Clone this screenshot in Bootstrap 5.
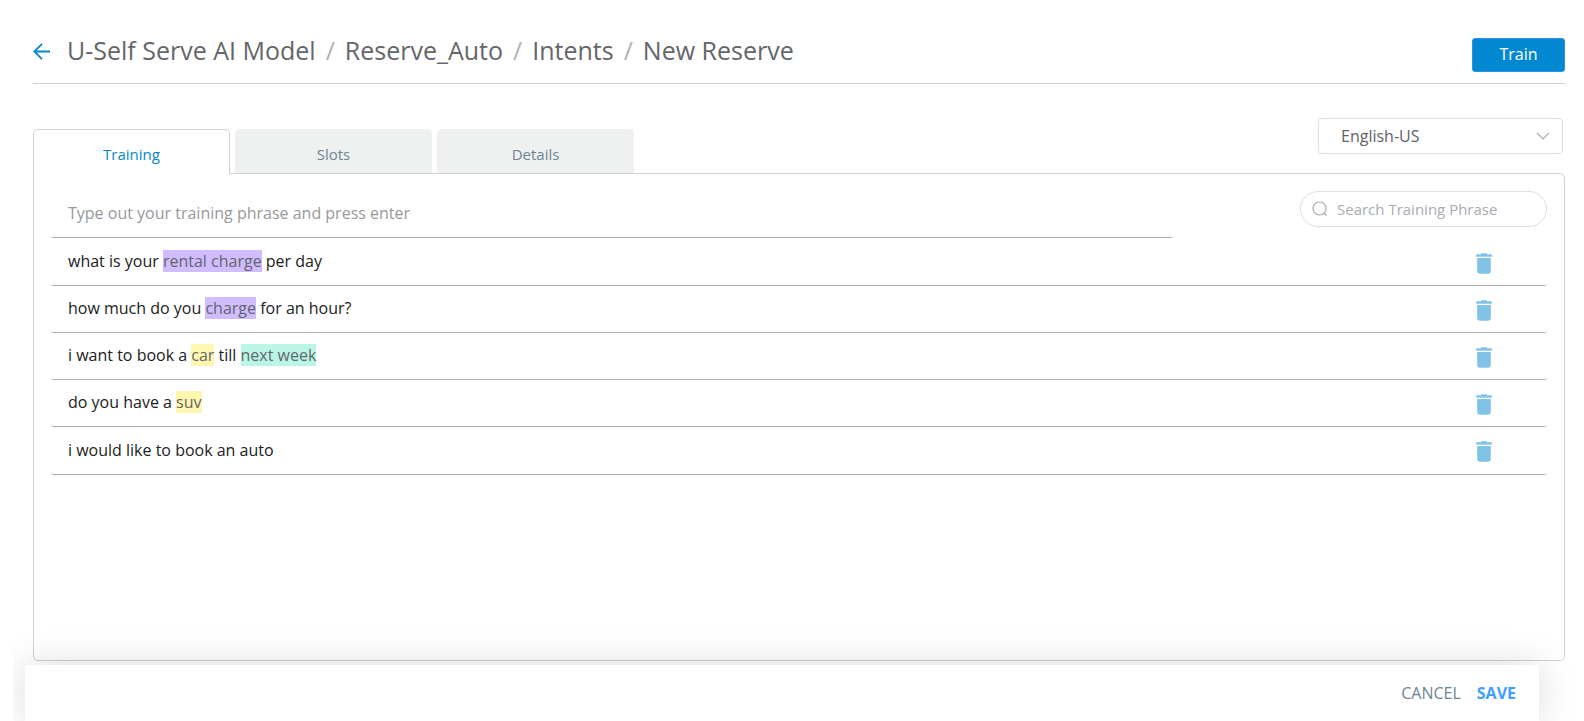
<!DOCTYPE html>
<html lang="en">
<head>
<meta charset="utf-8">
<meta name="viewport" content="width=device-width, initial-scale=1">
<title>New Reserve - Training</title>
<link rel="stylesheet" href="https://cdn.jsdelivr.net/npm/bootstrap@5.3.0/dist/css/bootstrap.min.css">
<style>
  body { font-family: "Open Sans", "Noto Sans", sans-serif; font-size: 16px; line-height: 24px; color: #212121; background: #fff; }
  .page-main { padding: 28px 19px 0 33px; }
  .page-head { height: 56px; border-bottom: 1px solid #cfd2d3; }
  .back-link { color: #0288d1; width: 34px; padding-top: 15px; }
  .crumbs { --bs-breadcrumb-divider-color: #aeb1b9; --bs-breadcrumb-item-padding-x: 10px; --bs-breadcrumb-font-size: 25px; line-height: 36px; padding-top: 4px; }
  .crumbs a, .crumbs .breadcrumb-item.active { color: #63666a; text-decoration: none; }
  .btn-train { width: 93px; height: 34px; margin-top: 10px; padding: 0 0 2px; font-weight: 500; border-radius: 3px; color: #fff; background: #0288d1; border: 1px solid #2f8ff0; line-height: 30px; }
  .btn-train:hover { background: #0277bd; color: #fff; }
  .tab-bar { margin-top: 34px; }
  .phrase-tabs { gap: 5px; border: 0; }
  .phrase-tabs .nav-link { width: 197px; height: 44px; margin: 0; padding: 4px 0 0; font-size: 15px; border: 1px solid #eff1f1; border-bottom: 0; border-radius: 5px 5px 0 0; background: #eff1f1; color: #6c8591; }
  .phrase-tabs .nav-link.active { height: 45px; margin-bottom: -1px; position: relative; z-index: 1; border-color: #d0d3d6; background: #fff; color: #0288d1; }
  .lang-select { width: 245px; height: 36px; margin: 0 2px 19px 0; padding: 0 40px 0 22px; color: #606266; border-color: #dcdfe6; border-radius: 4px; background: #fff; appearance: none; }
  .lang-wrap svg { position: absolute; right: 15px; top: 13px; pointer-events: none; }
  .panel { border: 1px solid #cfd2d3; border-radius: 0 5px 5px 5px; padding: 17px 17px 0; }
  .phrase-input { width: 75%; height: 47px; padding: 0 17px 2px; border: 0; border-bottom: 1px solid #aab1b3; border-radius: 3px; color: #212121; }
  .phrase-input::placeholder { color: #97989b; }
  .search-wrap { width: 247px; }
  .search-wrap svg { position: absolute; left: 12px; top: 10px; }
  .search-field { height: 36px; border-radius: 18px; border-color: #dcdfe6; padding: 0 15px 0 36px; font-size: 15px; }
  .search-field::placeholder { color: #a8abb2; }
  .phrases { margin-top: 1px; }
  .phrase { height: 47px; padding: 0 55px 2px 17px; border-bottom: 1px solid #aab1b3; border-radius: 3px; }
  .phrase:last-child { height: 48px; }
  .entity { color: #63666a; padding: 0; }
  .entity-charge { background: #d0bcff; }
  .entity-vehicle { background: #fff7b0; }
  .entity-date { background: #b9f6e6; }
  .btn-trash { padding: 4px 0 0; border: 0; line-height: 0; color: #81c3e7; }
  .btn-trash:hover { color: #0288d1; }
  .action-bar { height: 56px; margin: 4px 45px 0 25px; padding-right: 23px; background: #fff; box-shadow: 0 0 38px rgba(0, 0, 0, .15); clip-path: inset(-50px -40px 0 -12px); }
  .action-bar .btn { padding: 0; border: 0; line-height: 24px; }
  .btn-cancel { color: #6c8591; }
  .btn-save { color: #409eff; font-weight: 700; }
</style>
</head>
<body class="d-flex flex-column min-vh-100">
<svg class="d-none" aria-hidden="true">
  <symbol id="trash" viewBox="0 0 16 21">
    <path d="M5 .3h6v1h4.800v2.500H.2V1.300H5z M1.200 5h13.600v13a2.800 2.800 0 0 1-2.800 2.800H4a2.800 2.800 0 0 1-2.800-2.800z" fill="currentColor"/>
  </symbol>
</svg>
<main class="page-main flex-grow-1 d-flex flex-column">
  <header class="page-head d-flex align-items-start">
    <a href="#" class="back-link" aria-label="Back">
      <svg class="d-block" width="18" height="17" viewBox="0 0 18 17" fill="none" stroke="currentColor" stroke-width="1.800"><path d="M17 8.500H1.500M9 .8L1.300 8.500 9 16.200"/></svg>
    </a>
    <nav aria-label="breadcrumb" class="flex-grow-1">
      <ol class="breadcrumb crumbs mb-0">
        <li class="breadcrumb-item"><a href="#">U-Self Serve AI Model</a></li>
        <li class="breadcrumb-item"><a href="#">Reserve_Auto</a></li>
        <li class="breadcrumb-item"><a href="#">Intents</a></li>
        <li class="breadcrumb-item active" aria-current="page">New Reserve</li>
      </ol>
    </nav>
    <button type="button" class="btn btn-train">Train</button>
  </header>

  <div class="tab-bar d-flex justify-content-between align-items-end">
    <div class="nav nav-tabs phrase-tabs" role="tablist">
      <button class="nav-link active" type="button" role="tab" aria-selected="true">Training</button>
      <button class="nav-link" type="button" role="tab" aria-selected="false">Slots</button>
      <button class="nav-link" type="button" role="tab" aria-selected="false">Details</button>
    </div>
    <div class="lang-wrap position-relative">
      <select class="form-select lang-select" aria-label="Language">
        <option>English-US</option>
      </select>
      <svg width="14" height="10" viewBox="0 0 14 10" fill="none" stroke="#a8abb2" stroke-width="1.200"><path d="M1 2l6 6 6-6"/></svg>
    </div>
  </div>

  <section class="panel flex-grow-1">
    <div class="d-flex justify-content-between align-items-start">
      <input type="text" class="phrase-input" placeholder="Type out your training phrase and press enter" aria-label="Training phrase">
      <div class="search-wrap position-relative">
        <svg width="16" height="16" viewBox="0 0 16 16" fill="none" stroke="#a8abb2" stroke-width="1.200"><circle cx="7.500" cy="7.500" r="6.500"/><path d="M12 12l2.500 2.500"/></svg>
        <input type="search" class="form-control search-field" placeholder="Search Training Phrase" aria-label="Search Training Phrase">
      </div>
    </div>
    <ul class="list-unstyled phrases mb-0">
      <li class="phrase d-flex align-items-center justify-content-between">
        <span>what is your <mark class="entity entity-charge">rental charge</mark> per day</span>
        <button type="button" class="btn btn-trash" aria-label="Delete phrase"><svg width="16" height="21"><use href="#trash"/></svg></button>
      </li>
      <li class="phrase d-flex align-items-center justify-content-between">
        <span>how much do you <mark class="entity entity-charge">charge</mark> for an hour?</span>
        <button type="button" class="btn btn-trash" aria-label="Delete phrase"><svg width="16" height="21"><use href="#trash"/></svg></button>
      </li>
      <li class="phrase d-flex align-items-center justify-content-between">
        <span>i want to book a <mark class="entity entity-vehicle">car</mark> till <mark class="entity entity-date">next week</mark></span>
        <button type="button" class="btn btn-trash" aria-label="Delete phrase"><svg width="16" height="21"><use href="#trash"/></svg></button>
      </li>
      <li class="phrase d-flex align-items-center justify-content-between">
        <span>do you have a <mark class="entity entity-vehicle">suv</mark></span>
        <button type="button" class="btn btn-trash" aria-label="Delete phrase"><svg width="16" height="21"><use href="#trash"/></svg></button>
      </li>
      <li class="phrase d-flex align-items-center justify-content-between">
        <span>i would like to book an auto</span>
        <button type="button" class="btn btn-trash" aria-label="Delete phrase"><svg width="16" height="21"><use href="#trash"/></svg></button>
      </li>
    </ul>
  </section>
</main>
<footer class="action-bar d-flex justify-content-end align-items-center gap-3">
  <button type="button" class="btn btn-cancel">CANCEL</button>
  <button type="button" class="btn btn-save">SAVE</button>
</footer>
<script src="https://cdn.jsdelivr.net/npm/bootstrap@5.3.0/dist/js/bootstrap.bundle.min.js"></script>
</body>
</html>
